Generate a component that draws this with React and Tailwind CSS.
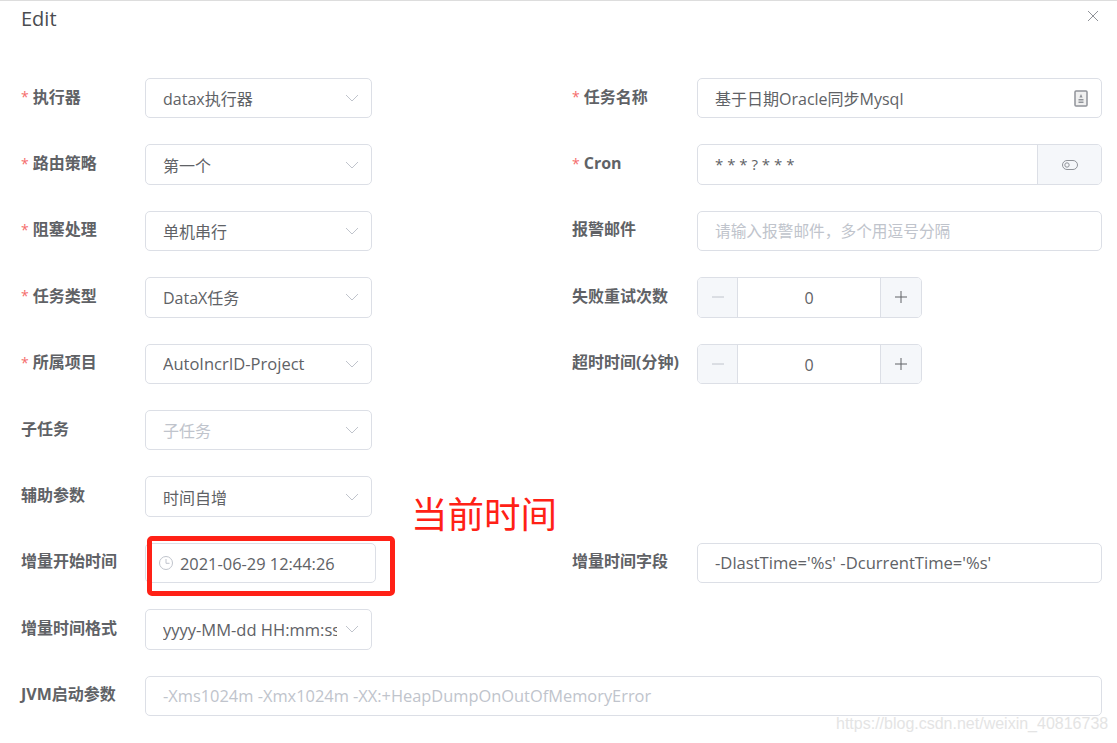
import React from "react";

const Label = ({ text, required, width = "w-[125px]" }) => (
  <label className={width + " shrink-0 -mt-[3px] flex items-center text-[16px] font-bold text-[#606266] whitespace-nowrap"}>
    {required && <span className="text-[#f56c6c] font-normal mr-[4px] text-[14px]">*</span>}
    {text}
  </label>
);

const Box = ({ className = "", children }) => (
  <div className={"h-full bg-white border border-[#dcdfe6] rounded-[5px] flex items-center " + className}>{children}</div>
);

const Chevron = () => (
  <svg width="14" height="8" viewBox="0 0 14 8" fill="none" stroke="#c0c4cc" strokeWidth="1" className="shrink-0">
    <path d="M1 1l6 6 6-6" />
  </svg>
);

const Select = ({ value, placeholder, latin }) => (
  <Box className="w-[227px] pl-[17px] pr-[12px]">
    <span className={"flex-1 overflow-hidden whitespace-nowrap mr-[8px] pt-[2px] " + (latin ? "text-[16.5px] " : "") + (placeholder ? "text-[#c0c4cc]" : "text-[#606266]")}>{value}</span>
    <Chevron />
  </Box>
);

const Stepper = () => (
  <div className="w-[225px] h-full bg-white border border-[#dcdfe6] rounded-[5px] flex items-stretch overflow-hidden text-[#606266]">
    <div className="w-[40px] bg-[#f5f7fa] border-r border-[#dcdfe6] flex items-center justify-center">
      <svg width="14" height="14" viewBox="0 0 14 14" stroke="#c0c4cc" strokeWidth="1"><path d="M1 7h12" /></svg>
    </div>
    <div className="flex-1 flex items-center justify-center pt-[2px]">0</div>
    <div className="w-[41px] bg-[#f5f7fa] border-l border-[#dcdfe6] flex items-center justify-center">
      <svg width="14" height="14" viewBox="0 0 14 14" stroke="#606266" strokeWidth="1"><path d="M1 7h12M7 1v12" /></svg>
    </div>
  </div>
);

const Left = ({ label, required, children }) => (
  <div className="w-[551px] shrink-0 flex items-center h-full">
    <Label text={label} required={required} width="w-[124px]" />
    {children}
  </div>
);

const Right = ({ label, required, children }) => (
  <div className="flex-1 flex items-center h-full">
    <Label text={label} required={required} />
    {children}
  </div>
);

const Row = ({ children }) => <div className="flex h-[40.4px] mb-[26px]">{children}</div>;

export default function App() {
  return (
    <div className="relative w-[1117px] h-[743px] overflow-hidden bg-white border-t border-[#dddddd] text-[16px] [font-family:'Open_Sans','Noto_Sans_CJK_SC',sans-serif]">
      <div className="flex items-center justify-between pl-[21px] pr-[18px] h-[36px]">
        <span className="text-[20px] text-[#4a4c50]">Edit</span>
        <svg width="12" height="12" viewBox="0 0 12 12" stroke="#909399" strokeWidth="1" className="-mt-[6px]">
          <path d="M1 1l10 10M11 1L1 11" />
        </svg>
      </div>
      <div className="pt-[41px] pl-[21px] pr-[15px]">
        <Row>
          <Left label="执行器" required><Select value="datax执行器" /></Left>
          <Right label="任务名称" required>
            <Box className="flex-1 pl-[17px] pr-[13px] justify-between text-[#606266]">
              <span className="pt-[2px]">基于日期Oracle同步Mysql</span>
              <svg width="14" height="17" viewBox="0 0 14 17" className="shrink-0">
                <rect x="1" y="1" width="12" height="15" rx="1" fill="#f0f0f0" stroke="#909399" strokeWidth="1.5" />
                <path d="M7 4l1.6 3.5H5.4zM4.5 9h5v1.5h-5zM4.5 11.5h5V13h-5z" fill="#909399" />
              </svg>
            </Box>
          </Right>
        </Row>
        <Row>
          <Left label="路由策略" required><Select value="第一个" /></Left>
          <Right label="Cron" required>
            <Box className="flex-1 items-stretch overflow-hidden text-[#606266]">
              <span className="flex-1 pl-[17px] flex items-center text-[15px]">* * * ? * * *</span>
              <div className="w-[64px] bg-[#f5f7fa] border-l border-[#dcdfe6] flex items-center justify-center">
                <svg width="16" height="10" viewBox="0 0 16 10" fill="none" stroke="#909399" strokeWidth="1">
                  <rect x="0.5" y="0.5" width="15" height="9" rx="4.5" />
                  <circle cx="5" cy="5" r="2.2" />
                </svg>
              </div>
            </Box>
          </Right>
        </Row>
        <Row>
          <Left label="阻塞处理" required><Select value="单机串行" /></Left>
          <Right label="报警邮件">
            <Box className="flex-1 pl-[17px] text-[#c0c4cc] text-[15.7px]"><span className="pt-[2px]">请输入报警邮件，多个用逗号分隔</span></Box>
          </Right>
        </Row>
        <Row>
          <Left label="任务类型" required><Select value="DataX任务" /></Left>
          <Right label="失败重试次数"><Stepper /></Right>
        </Row>
        <Row>
          <Left label="所属项目" required><Select value="AutoIncrID-Project" latin /></Left>
          <Right label="超时时间(分钟)"><Stepper /></Right>
        </Row>
        <Row>
          <Left label="子任务"><Select value="子任务" placeholder /></Left>
        </Row>
        <Row>
          <Left label="辅助参数"><Select value="时间自增" /></Left>
        </Row>
        <Row>
          <Left label="增量开始时间">
            <Box className="w-[231px] pl-[12px] text-[#606266] text-[16.4px]">
              <svg width="16" height="16" viewBox="0 0 16 16" fill="none" stroke="#c0c4cc" strokeWidth="1" className="mr-[6px] shrink-0">
                <circle cx="8" cy="8" r="6.5" />
                <path d="M8 4v4.3h3.5" />
              </svg>
              <span className="pt-[2px]">2021-06-29 12:44:26</span>
            </Box>
          </Left>
          <Right label="增量时间字段">
            <Box className="flex-1 pl-[17px] text-[#606266] text-[16.6px] whitespace-nowrap"><span className="pt-[2px]">-DlastTime='%s' -DcurrentTime='%s'</span></Box>
          </Right>
        </Row>
        <Row>
          <Left label="增量时间格式"><Select value="yyyy-MM-dd HH:mm:ss" latin /></Left>
        </Row>
        <div className="flex items-center h-[40.4px]">
          <Label text="JVM启动参数" width="w-[124px]" />
          <Box className="flex-1 pl-[17px] text-[#c0c4cc] text-[16.4px]"><span className="pt-[2px]">-Xms1024m -Xmx1024m -XX:+HeapDumpOnOutOfMemoryError</span></Box>
        </div>
      </div>

      {/* annotation drawn over the form */}
      <div className="absolute left-[147px] top-[535px] w-[248px] h-[60px] border-[5px] border-[#ff2116] rounded-[5px]" />
      <div className="absolute left-[411px] top-[488px] text-[36.5px] leading-[50px] text-[#ff2116]">当前时间</div>
      <div className="absolute left-[836px] top-[713px] text-[16px] leading-[20px] text-[#e4e4e4] [font-family:'Liberation_Sans',sans-serif]">https://blog.csdn.net/weixin_40816738</div>
    </div>
  );
}
